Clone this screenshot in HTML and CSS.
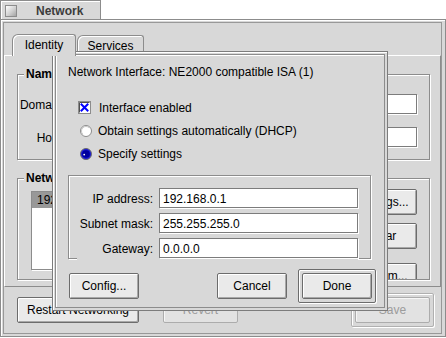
FILE: index.html
```html
<!DOCTYPE html>
<html lang="en">
<head>
    <meta charset="UTF-8">
    <meta name="viewport" content="width=device-width, initial-scale=1.0">
    <title>Network</title>
    <link rel="stylesheet" href="styles.css">
</head>
<body>
    <!-- Network preferences window -->
    <div class="window net-window">
        <div class="win-tab">
            <span class="close-box"></span>
            <span class="win-title">Network</span>
        </div>
        <div class="win-frame">
            <div class="win-body">
                <div class="tabs">
                    <div class="tab active">Identity</div>
                    <div class="tab services">Services</div>
                </div>
                <div class="tab-content">
                    <div class="group names">
                        <div class="group-title">Names</div>
                        <div class="field-row">
                            <label class="row-label">Domain name:</label>
                            <div class="text-field"></div>
                        </div>
                        <div class="field-row">
                            <label class="row-label">Host name:</label>
                            <div class="text-field"></div>
                        </div>
                    </div>
                    <div class="group interfaces">
                        <div class="group-title">Network Interfaces</div>
                        <div class="iface-body">
                            <div class="iface-list">
                                <div class="list-item selected">192.168.0.1</div>
                            </div>
                            <div class="iface-buttons">
                                <button class="btn">Settings...</button>
                                <button class="btn clear">Clear</button>
                                <button class="btn custom">Custom...</button>
                            </div>
                        </div>
                    </div>
                </div>
                <div class="win-actions">
                    <button class="btn restart">Restart Networking</button>
                    <button class="btn revert" disabled>Revert</button>
                    <span class="spacer"></span>
                    <span class="default-frame disabled"><button class="btn" disabled>Save</button></span>
                </div>
            </div>
        </div>
    </div>

    <!-- Interface settings dialog -->
    <div class="window dialog">
        <div class="dialog-body">
            <div class="dialog-title">Network Interface: NE2000 compatible ISA (1)</div>
            <div class="options">
                <div class="option">
                    <svg class="check" width="13" height="13" viewBox="0 0 13 13">
                        <rect x="0.5" y="0.5" width="12" height="12" fill="#fff" stroke="#8c8c8c"/>
                        <path d="M1.5 11.5V1.5H11.5" fill="none" stroke="#505050"/>
                        <path d="M3.5 3.5L9.5 9.5M9.5 3.5L3.5 9.5" stroke="#0000ff" stroke-width="2" stroke-linecap="square"/>
                    </svg>
                    Interface enabled
                </div>
                <div class="option">
                    <svg class="radio" width="12" height="12" viewBox="0 0 12 12">
                        <circle cx="6" cy="6" r="5.5" fill="#fff" stroke="#8c8c8c"/>
                        <path d="M2.8 9.2A4.5 4.5 0 0 1 9.2 2.8" fill="none" stroke="#c8c8c8"/>
                    </svg>
                    Obtain settings automatically (DHCP)
                </div>
                <div class="option">
                    <svg class="radio" width="12" height="12" viewBox="0 0 12 12">
                        <circle cx="6" cy="6" r="5.5" fill="#1818d8" stroke="#6c6c6c"/>
                        <circle cx="6" cy="6" r="3.8" fill="#00009c"/>
                        <circle cx="4.2" cy="6.6" r="0.9" fill="#fff"/>
                    </svg>
                    Specify settings
                </div>
            </div>
            <div class="group ip-box">
                <div class="field-row">
                    <label class="row-label">IP address:</label>
                    <div class="text-field">192.168.0.1</div>
                </div>
                <div class="field-row">
                    <label class="row-label">Subnet mask:</label>
                    <div class="text-field">255.255.255.0</div>
                </div>
                <div class="field-row">
                    <label class="row-label">Gateway:</label>
                    <div class="text-field">0.0.0.0</div>
                </div>
            </div>
            <div class="dialog-actions">
                <button class="btn">Config...</button>
                <span class="spacer"></span>
                <button class="btn cancel">Cancel</button>
                <span class="default-frame"><button class="btn">Done</button></span>
            </div>
        </div>
    </div>
</body>
</html>
```

FILE: styles.css
```css
/* Fenetres facon BeOS */
* {
    box-sizing: border-box;
}

body {
    margin: 0;
    width: 446px;
    height: 338px;
    overflow: hidden;
    position: relative;
    background-color: #ffffff;
    font-family: "Liberation Sans", Arial, sans-serif;
    font-size: 12px;
    line-height: 14px;
    color: #000000;
}

.window {
    position: absolute;
}

/* Fenetre principale */
.net-window {
    left: 0;
    top: 0;
    width: 446px;
}

.win-tab {
    display: flex;
    align-items: center;
    width: 101px;
    height: 19px;
    padding: 2px 0 0 4px;
    background-color: #d8d8d8;
    border: 1px solid #8c8c8c;
    border-bottom: none;
    box-shadow: inset 1px 1px 0 #ffffff;
}

.close-box {
    width: 12px;
    height: 12px;
    border: 1px solid #8c8c8c;
    background: linear-gradient(135deg, #ffffff 0%, #d0d0d0 55%, #a4a4a4 100%);
}

.win-title {
    margin-left: 19px;
    font-weight: bold;
    color: #3c3c3c;
}

.win-frame {
    height: 318px;
    border: 1px solid #8c8c8c;
    padding: 2px 3px 2px 2px;
    background-color: #d8d8d8;
    box-shadow: inset 1px 1px 0 #ffffff;
}

.win-body {
    height: 100%;
    display: flex;
    flex-direction: column;
    border: 1px solid #989898;
    padding-top: 11px;
}

.tabs {
    display: flex;
    height: 21px;
    padding-left: 8px;
}

.tab {
    width: 64px;
    height: 22px;
    padding-top: 3px;
    text-align: center;
    background-color: #d8d8d8;
    border: 1px solid #8c8c8c;
    border-bottom: none;
    border-radius: 6px 3px 0 0;
    box-shadow: inset 1px 1px 0 #ffffff;
}

.tab.active {
    position: relative;
    z-index: 1;
}

.tab.services {
    width: 67px;
    height: 20px;
    margin: 1px 0 0 1px;
}

.tab-content {
    height: 232px;
    border: 1px solid;
    border-color: #ffffff #8c8c8c #8c8c8c #ffffff;
    padding: 0 10px 0 12px;
}

/* Boites groupees */
.group {
    border: 1px solid #8c8c8c;
    box-shadow: 1px 1px 0 #ffffff, inset 1px 1px 0 #ffffff;
}

.group-title {
    width: fit-content;
    margin: -8px 0 0 6px;
    padding: 0 2px;
    background-color: #d8d8d8;
    font-weight: bold;
}

.field-row {
    display: flex;
    align-items: flex-start;
    height: 20px;
}

.row-label {
    line-height: 20px;
    padding-top: 1px;
    text-align: right;
    white-space: nowrap;
}

.text-field {
    height: 20px;
    padding: 2px 0 0 3px;
    line-height: 16px;
    background-color: #ffffff;
    border: 1px solid #7c7c7c;
    box-shadow: 1px 1px 0 #ffffff;
    white-space: nowrap;
}

.names {
    margin-top: 18px;
    padding-bottom: 12px;
}

.names .field-row {
    margin-top: 13px;
}

.names .field-row:first-of-type {
    margin-top: 6px;
}

.names .row-label {
    width: 80px;
}

.names .text-field {
    flex: 1;
    margin: 0 12px 0 4px;
}

.interfaces {
    margin-top: 18px;
}

.iface-body {
    display: flex;
    align-items: flex-start;
    height: 90px;
    margin-top: 4px;
    overflow: hidden;
}

.iface-list {
    flex: 1;
    height: 79px;
    margin: 2px 12px 0 13px;
    background-color: #ffffff;
    border: 1px solid #8c8c8c;
    box-shadow: 1px 1px 0 #ffffff;
    overflow: hidden;
}

.list-item {
    height: 16px;
    padding: 1px 0 0 5px;
    white-space: nowrap;
}

.list-item.selected {
    background-color: #989898;
}

.iface-buttons {
    display: flex;
    flex-direction: column;
    margin-right: 12px;
}

.iface-buttons .clear {
    margin-top: 8px;
}

.iface-buttons .custom {
    margin-top: 14px;
}

/* Boutons */
.btn {
    flex: none;
    width: 70px;
    height: 26px;
    padding: 0;
    font: inherit;
    color: #000000;
    background-color: #eaeaea;
    border: 1px solid #6c6c6c;
    border-radius: 2px;
    box-shadow: inset 1px 1px 0 #ffffff, inset -1px -1px 0 #a8a8a8;
}

.btn:disabled {
    color: #9c9c9c;
    background-color: #e2e2e2;
    border-color: #acacac;
    box-shadow: inset 1px 1px 0 #f6f6f6;
}

.default-frame {
    display: flex;
    padding: 3px;
    border: 1px solid #6c6c6c;
    border-radius: 2px;
    box-shadow: inset 1px 1px 0 #ffffff, 1px 1px 0 #ffffff;
}

.default-frame.disabled {
    border-color: #b0b0b0;
}

.spacer {
    flex: 1;
}

.win-actions {
    flex: 1;
    display: flex;
    align-items: center;
    padding: 0 7px 0 13px;
}

.restart {
    width: 122px;
}

.revert,
.default-frame .btn:disabled {
    width: 75px;
}

.revert {
    margin-left: 24px;
}

/* Boite de dialogue */
.dialog {
    left: 52px;
    top: 51px;
    width: 336px;
    height: 260px;
    padding: 2px;
    background-color: #d8d8d8;
    border: 1px solid #7c7c7c;
    box-shadow: inset 1px 1px 0 #ffffff;
}

.dialog-body {
    height: 100%;
    padding: 10px 8px 0 12px;
    border: 1px solid #8c8c8c;
    box-shadow: inset 1px 1px 0 #ffffff;
}

.dialog-title {
    white-space: nowrap;
}

.options {
    display: flex;
    flex-direction: column;
    gap: 8px;
    margin: 21px 0 0 10px;
}

.option {
    display: flex;
    align-items: center;
    height: 15px;
    white-space: nowrap;
}

.option .check {
    margin-right: 8px;
}

.option .radio {
    margin: 0 6px 0 2px;
}

.ip-box {
    width: 303px;
    margin-top: 14px;
    padding: 12px 0 0 8px;
}

.ip-box .field-row {
    width: 281px;
    margin-bottom: 5px;
    background-color: #d8d8d8;
}

.ip-box .field-row:last-child {
    height: 22px;
    margin-bottom: -2px;
}

.ip-box .row-label {
    width: 82px;
    padding-right: 6px;
}

.ip-box .text-field {
    width: 199px;
}

.dialog-actions {
    display: flex;
    align-items: center;
    margin-top: 10px;
    padding-left: 1px;
}

.dialog-actions .cancel {
    margin-right: 11px;
}
```
